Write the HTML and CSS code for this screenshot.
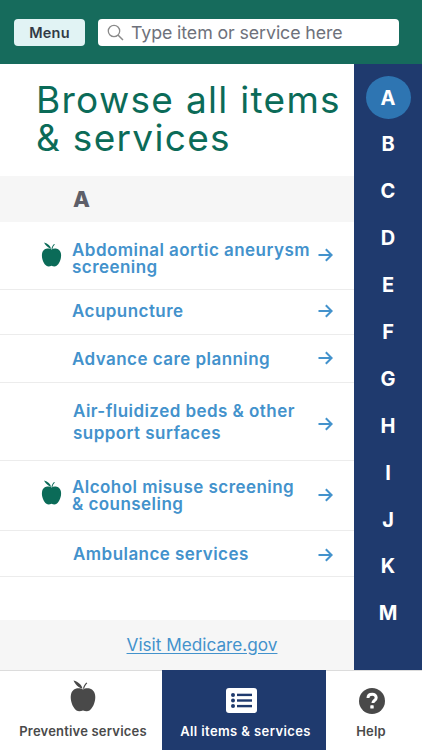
FILE: index.html
```html
<!DOCTYPE html>
<html lang="en">
<head>
<meta charset="utf-8">
<title>Browse all items &amp; services</title>
<link rel="stylesheet" href="styles.css">
</head>
<body>
<svg class="defs" width="0" height="0" aria-hidden="true">
  <symbol id="apple" viewBox="0 0 26 32">
    <path d="M13 9.500C10 7.600 2.600 7.400 1 14.500c-1.300 6 2 13.800 5.500 16 2 1.300 4.300.8 6.500 0 2.200.8 4.500 1.300 6.500 0 3.500-2.200 6.800-10 5.500-16C23.400 7.400 16 7.600 13 9.500z"/>
    <path d="M12.500 8.800C11.800 4.800 8.500 2 3.500 .5 4 1.800 5 3 5.800 4.300c1.500 2 4 3.700 6.700 4.500z"/>
    <path d="M13 8.800c.3-2.300 1.500-4.600 3.300-6.300l1 .8c-1.700 1.700-2.800 3.500-3.100 5.500z"/>
  </symbol>
  <symbol id="arrow" viewBox="0 0 15 14">
    <path d="M.5 7h13M7.800 1.200 13.600 7l-5.800 5.800" fill="none" stroke="currentColor" stroke-width="2"/>
  </symbol>
</svg>
<div class="app">
  <header class="topbar">
    <button class="menu-btn">Menu</button>
    <div class="search">
      <svg class="search-icon" viewBox="0 0 17 17"><circle cx="7" cy="7" r="5.700" fill="none" stroke="#8a8a8a" stroke-width="1.300"/><path d="M11 11l5 5" stroke="#8a8a8a" stroke-width="1.500" fill="none"/></svg>
      <span class="placeholder">Type item or service here</span>
    </div>
  </header>
  <div class="body">
    <main class="content">
      <h1 class="title">Browse all items<br>&amp; services</h1>
      <div class="section-head">A</div>
      <ul class="list">
        <li class="row row-1 tight"><svg class="apple"><use href="#apple"/></svg><span class="label">Abdominal aortic aneurysm<br>screening</span><svg class="arrow"><use href="#arrow"/></svg></li>
        <li class="row row-2"><span class="label">Acupuncture</span><svg class="arrow"><use href="#arrow"/></svg></li>
        <li class="row row-3"><span class="label">Advance care planning</span><svg class="arrow"><use href="#arrow"/></svg></li>
        <li class="row row-4 loose"><span class="label">Air-fluidized beds &amp; other<br>support surfaces</span><svg class="arrow"><use href="#arrow"/></svg></li>
        <li class="row row-5 tight"><svg class="apple"><use href="#apple"/></svg><span class="label">Alcohol misuse screening<br>&amp; counseling</span><svg class="arrow"><use href="#arrow"/></svg></li>
        <li class="row row-6"><span class="label">Ambulance services</span><svg class="arrow"><use href="#arrow"/></svg></li>
      </ul>
      <div class="visit"><a href="#">Visit Medicare.gov</a></div>
    </main>
    <nav class="alpha">
      <span class="letter active">A</span><span class="letter">B</span><span class="letter">C</span><span class="letter">D</span><span class="letter">E</span><span class="letter">F</span><span class="letter">G</span><span class="letter">H</span><span class="letter">I</span><span class="letter">J</span><span class="letter">K</span><span class="letter">M</span>
    </nav>
  </div>
  <footer class="tabs">
    <div class="tab tab-prev"><svg class="tab-apple"><use href="#apple"/></svg><span>Preventive services</span></div>
    <div class="tab tab-all">
      <svg class="tab-list" viewBox="0 0 31 25"><rect width="31" height="25" rx="3" fill="#fff"/><g fill="#1f3a6e"><circle cx="7" cy="7" r="2"/><circle cx="7" cy="12.500" r="2"/><circle cx="7" cy="18" r="2"/><rect x="11" y="5.700" width="15" height="2.400"/><rect x="11" y="11.300" width="15" height="2.400"/><rect x="11" y="16.900" width="15" height="2.400"/></g></svg>
      <span>All items &amp; services</span>
    </div>
    <div class="tab tab-help">
      <svg class="tab-q" viewBox="0 0 26 26"><circle cx="13" cy="13" r="13" fill="#494949"/><path d="M9 10c0-2.500 1.800-3.800 4.200-3.800 2.300 0 4 1.400 4 3.500 0 2.800-3.200 2.800-3.200 5v.4" fill="none" stroke="#fff" stroke-width="3"/><rect x="11.300" y="17.300" width="3.400" height="3.200" rx=".6" fill="#fff"/></svg>
      <span>Help</span>
    </div>
  </footer>
</div>
</body>
</html>
```
FILE: styles.css
```css
* { box-sizing: border-box; }
html, body { margin: 0; padding: 0; }
body { font-family: Inter, "Noto Sans", "Liberation Sans", sans-serif; background: #fff; }
.defs { display: block; height: 0; }
.app { width: 422px; height: 750px; display: flex; flex-direction: column; overflow: hidden; }

.topbar { height: 64px; flex: none; background: #166b5c; display: flex; align-items: center; padding: 0 23px 0 14px; gap: 13px; }
.menu-btn { width: 71px; height: 27px; border: 0; border-radius: 4px; background: #e1f3f4; color: #323a45; font: 600 14.500px Inter, sans-serif; letter-spacing: .2px; padding: 0; }
.search { flex: 1; height: 27px; background: #fff; border-radius: 4px; display: flex; align-items: center; padding-left: 9px; gap: 7px; }
.search-icon { width: 17px; height: 17px; flex: none; }
.placeholder { font-size: 17.800px; color: #6e717b; white-space: nowrap; letter-spacing: -.1px; }

.body { flex: 1; display: flex; min-height: 0; }
.content { flex: 1; display: flex; flex-direction: column; min-width: 0; }
.title { margin: 0; height: 112px; padding: 17px 0 0 36px; font-size: 37px; line-height: 38px; font-weight: 400; color: #0b6b58; white-space: nowrap; letter-spacing: 1.300px; }
.section-head { height: 46px; flex: none; background: #f6f6f6; padding-left: 73px; font-size: 22px; line-height: 47px; font-weight: 800; color: #5e5f69; }

.list { list-style: none; margin: 0; padding: 0; flex: 1; }
.row { display: flex; align-items: center; position: relative; padding-left: 72px; border-bottom: 1.500px solid #ececec; color: #4392cc; }
.row-1 { height: 68px; padding-top: 6px; }
.row-2 { height: 45px; padding-bottom: 2px; }
.row-3 { height: 48px; }
.row-4 { height: 78px; }
.row-5 { height: 70px; }
.row-6 { height: 46px; }
.row-4 .label, .row-6 .label { margin-left: 1px; }
.label { font-size: 17px; font-weight: 600; line-height: 20px; white-space: nowrap; letter-spacing: .45px; }
.tight .label { line-height: 17px; }
.loose .label { line-height: 22px; }
.apple { position: absolute; left: 41px; top: 50%; width: 21px; height: 25px; margin-top: -14px; fill: #0b6b58; }
.row-5 .apple { margin-top: -16px; }
.arrow { position: absolute; left: 318px; top: 50%; width: 15px; height: 14px; margin-top: -7px; }
.row-1 .arrow { margin-top: -8px; }
.row-2 .arrow, .row-3 .arrow { margin-top: -8px; }
.row-4 .arrow { margin-top: -5px; }
.row-5 .arrow { margin-top: -8px; }
.row-6 .arrow { margin-top: -6px; }

.visit { height: 50px; flex: none; background: #f6f6f6; display: flex; align-items: center; justify-content: center; padding: 0 0 2px 50px; }
.visit a { color: #4392cc; font-size: 17.200px; text-decoration: underline; text-underline-offset: 2px; }

.alpha { width: 68px; flex: none; background: #1f3a6e; display: flex; flex-direction: column; align-items: center; padding-top: 12px; }
.letter { height: 46.900px; width: 45px; flex: none; display: flex; align-items: center; justify-content: center; color: #fff; font-size: 20px; font-weight: 700; }
.letter.active { height: 43px; margin-bottom: 2px; border-radius: 50%; background: #2e75b2; }

.tabs { height: 80px; flex: none; display: flex; background: #fff; border-top: 1px solid #dcdcdc; }
.tab { display: flex; flex-direction: column; align-items: center; font-size: 13px; font-weight: 600; letter-spacing: .2px; color: #4a4a4a; white-space: nowrap; position: relative; padding-top: 52px; }
.tab span { line-height: 16px; }
.tab svg { position: absolute; }
.tab-prev { width: 162px; padding-left: 4px; }
.tab-all { width: 164px; background: #1f3a6e; color: #fff; margin-top: -1px; padding-top: 53px; padding-left: 3px; letter-spacing: .4px; }
.tab-help { flex: 1; padding-right: 6px; }
.tab-apple { left: 70px; top: 9px; width: 26px; height: 32px; fill: #494949; }
.tab-list { left: 64px; top: 18px; width: 31px; height: 25px; }
.tab-q { left: 33px; top: 17px; width: 26px; height: 26px; }
```
